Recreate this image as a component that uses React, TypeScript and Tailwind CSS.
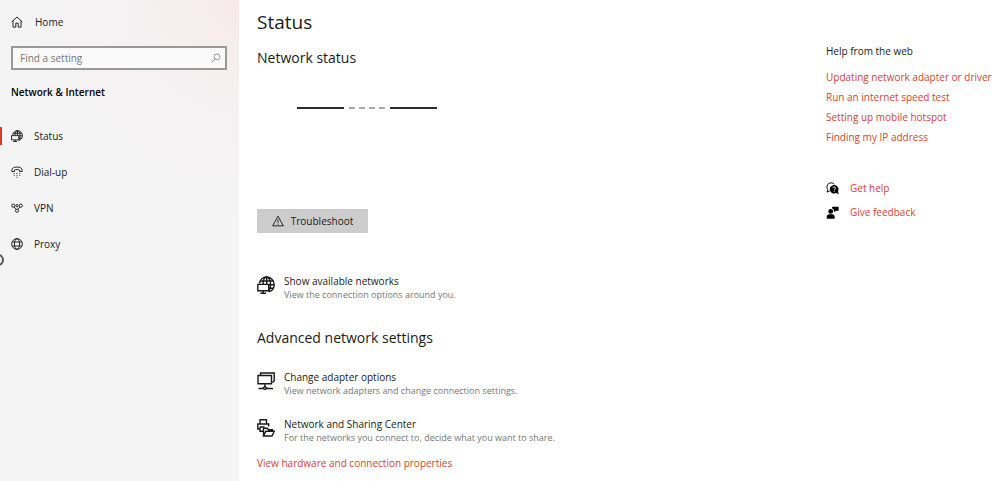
import type { ComponentType, ReactNode } from 'react'

type IconProps = { className?: string }

function LineIcon({ className, children }: { className?: string; children: ReactNode }) {
  return (
    <svg
      viewBox="0 0 18 18"
      className={className}
      fill="none"
      stroke="currentColor"
      strokeWidth="1.4"
      aria-hidden="true"
    >
      {children}
    </svg>
  )
}

function HomeIcon({ className }: IconProps) {
  return (
    <LineIcon className={className}>
      <path d="M1 9 9 1.500 17 9M3 7.200v9.500h4.200v-6h3.600v6H15V7.200" />
    </LineIcon>
  )
}

function SearchIcon({ className }: IconProps) {
  return (
    <LineIcon className={className}>
      <circle cx="11" cy="7" r="5.300" />
      <path d="M7.200 10.800 1 17" />
    </LineIcon>
  )
}

function NetworkGlobeIcon({ className }: IconProps) {
  return (
    <LineIcon className={className}>
      <path d="M2.500 7.500C3.100 3.700 6 1 9.500 1c4.300 0 7.700 3.300 7.700 7.400 0 3.700-2.500 6.600-5.700 7.300" />
      <path d="M6 8C6.200 4 7.700 1 9.700 1s3.900 3.300 3.900 7.400c0 2.600-.700 4.900-1.700 6.300M9.700 1v7M3.300 5h13M12 8.700h5.200M12 12.200h4.200" />
      <path d="M.800 8.400h10.900v6.400H.800zM6.200 14.800v2.400M3.400 17.200h5.600" />
    </LineIcon>
  )
}

function PhoneIcon({ className }: IconProps) {
  return (
    <LineIcon className={className}>
      <path d="M1.200 6.300C1.200 3.300 4.500 1.500 9 1.500s7.800 1.800 7.800 4.800v1.900h-4V6c-2-.900-5.600-.900-7.600 0v2.200h-4z" />
      <path d="M4 11h1.500M8.200 11h1.500M12.500 11H14M4 14h1.500M8.200 14h1.500M12.500 14H14M8.200 17h1.500" />
    </LineIcon>
  )
}

function VpnIcon({ className }: IconProps) {
  return (
    <LineIcon className={className}>
      <circle cx="3.300" cy="5.500" r="2.400" />
      <circle cx="9" cy="5.500" r="1.800" />
      <circle cx="14.700" cy="5.500" r="2.400" />
      <circle cx="9" cy="13" r="2.400" />
      <path d="M4.500 7.500 7.500 11M13.500 7.500l-3 3.500" />
    </LineIcon>
  )
}

function GlobeIcon({ className }: IconProps) {
  return (
    <LineIcon className={className}>
      <circle cx="9" cy="9" r="8" />
      <ellipse cx="9" cy="9" rx="3.800" ry="8" />
      <path d="M1.800 6h14.400M1.800 12h14.400" />
    </LineIcon>
  )
}

function WarningIcon({ className }: IconProps) {
  return (
    <LineIcon className={className}>
      <path d="M9 1.800 17 16.300H1zM9 6.500v5M9 13v1.500" />
    </LineIcon>
  )
}

function AdapterIcon({ className }: IconProps) {
  return (
    <LineIcon className={className}>
      <path d="M3.500 3.300V1h13.700v8l-2 1.500" />
      <path d="M1 3.500h13.500v8.300H1zM8 11.800v2.700M1.500 16.500h4.700M9.800 16.500H16" />
      <path d="M8 14.500 10 16.200 8 17.500 6 16.200z" />
    </LineIcon>
  )
}

function SharingIcon({ className }: IconProps) {
  return (
    <LineIcon className={className}>
      <path d="M3 5V.800h6.500V5M3 10H.800V5h10.900v2.500M3 8h4.500M3 8v4.300h3" />
      <path d="M6.500 16.500V9.200h3.800l1.200 1.500h4v1.500M6.500 17l2.300-4.800h8.500L15 17z" />
    </LineIcon>
  )
}

function HelpIcon({ className }: IconProps) {
  return (
    <svg viewBox="0 0 18 18" className={className} aria-hidden="true">
      <path
        d="M5 12.500 1.500 14l.800-3.500C-.200 6 2.300 1.200 7 1.200c1.800 0 3.300.700 4.400 1.900"
        fill="none"
        stroke="currentColor"
        strokeWidth="1.300"
      />
      <path
        d="M11.300 4a6 6 0 0 1 5.300 8.800l1 4.200-3.700-1.600A6 6 0 1 1 11.300 4z"
        fill="currentColor"
      />
      <path
        d="M9.500 8.500c0-2.300 3.700-2.300 3.700 0 0 1.400-1.800 1.300-1.800 2.900M11.400 12.300v1.300"
        fill="none"
        stroke="white"
        strokeWidth="1.200"
      />
    </svg>
  )
}

function FeedbackIcon({ className }: IconProps) {
  return (
    <svg viewBox="0 0 18 18" className={className} fill="currentColor" aria-hidden="true">
      <circle cx="6.500" cy="7.500" r="3.300" />
      <path d="M1 17.500v-2.500c0-2.100 1.500-3.500 3.500-3.500h4c2 0 3.500 1.400 3.500 3.500v2.500z" />
      <path d="M8.500 1h9v5.500h-3.700L11.500 9V6.500H10.800C10.800 4.800 10 3.800 8.500 3.300z" />
    </svg>
  )
}

const navItems: { label: string; icon: ComponentType<IconProps>; active?: boolean }[] = [
  { label: 'Status', icon: NetworkGlobeIcon, active: true },
  { label: 'Dial-up', icon: PhoneIcon },
  { label: 'VPN', icon: VpnIcon },
  { label: 'Proxy', icon: GlobeIcon },
]

const helpLinks = [
  'Updating network adapter or driver',
  'Run an internet speed test',
  'Setting up mobile hotspot',
  'Finding my IP address',
]

function Option({
  icon: Icon,
  title,
  text,
}: {
  icon: ComponentType<IconProps>
  title: string
  text: string
}) {
  return (
    <button type="button" className="flex items-start gap-[9px] text-left">
      <Icon className="mt-[2px] w-[18px] h-[18px] shrink-0" />
      <span>
        <span className="block leading-[14px]">{title}</span>
        <span className="block text-[9px] leading-[14px] text-[#777777]">{text}</span>
      </span>
    </button>
  )
}

export default function App() {
  return (
    <div className="relative flex min-h-screen overflow-hidden bg-white font-['Open_Sans','Noto_Sans',sans-serif] text-[10px] text-[#1a1a1a]">
      {/* Sidebar */}
      <div className="w-[239px] shrink-0 bg-[#f4f4f4] bg-[radial-gradient(circle_at_top_right,#f7eae9,#f5f1f2_100px,#f4f4f4_220px)]">
        <a href="#home" className="flex h-11 items-center gap-3 pl-[11px]">
          <HomeIcon className="w-3 h-3" />
          Home
        </a>
        <div className="mt-[2px] ml-[11px] mr-3 flex h-6 items-center border-2 border-[#999999] bg-[#fafafa] pr-1">
          <input
            type="text"
            aria-label="Find a setting"
            placeholder="Find a setting"
            className="min-w-0 flex-1 bg-transparent pl-[7px] leading-4 placeholder-[#767676] outline-none"
          />
          <SearchIcon className="w-[10px] h-[10px] text-[#808080]" />
        </div>
        <h2 className="mt-3 pl-[11px] leading-5 font-semibold text-black">
          Network &amp; Internet
        </h2>
        <nav className="mt-4">
          {navItems.map(({ label, icon: Icon, active }) => (
            <a key={label} href={`#${label}`} className="flex h-9 items-center">
              <span className={active ? 'h-[18px] w-[2px] bg-[#dd3b20]' : 'h-[18px] w-[2px]'} />
              <Icon className="ml-[9px] mr-[11px] w-3 h-3" />
              {label}
            </a>
          ))}
        </nav>
      </div>

      {/* Status page */}
      <main className="flex min-w-0 flex-1 flex-col items-start pl-[18px] pb-3">
        <h1 className="text-[19px] leading-[44px]">Status</h1>
        <h2 className="text-[14px] leading-7">Network status</h2>
        <svg
          viewBox="0 0 140 2"
          className="mt-[35px] mb-25 ml-10 w-[140px] h-[2px]"
          strokeWidth="2"
          aria-hidden="true"
        >
          <path d="M0 1h47M93 1h47" stroke="#2b2b2b" />
          <path d="M52 1h6M62 1h6M72 1h6M82 1h6" stroke="#aaaaaa" />
        </svg>
        <button
          type="button"
          className="flex h-6 w-[111px] items-center justify-center gap-[7px] bg-[#cccccc]"
        >
          <WarningIcon className="w-3 h-3" />
          Troubleshoot
        </button>
        <div className="mt-[41px]">
          <Option
            icon={NetworkGlobeIcon}
            title="Show available networks"
            text="View the connection options around you."
          />
        </div>
        <h2 className="mt-[22px] text-[14px] leading-7">Advanced network settings</h2>
        <div className="mt-[18px] flex flex-col items-start gap-[19px]">
          <Option
            icon={AdapterIcon}
            title="Change adapter options"
            text="View network adapters and change connection settings."
          />
          <Option
            icon={SharingIcon}
            title="Network and Sharing Center"
            text="For the networks you connect to, decide what you want to share."
          />
        </div>
        <a href="#properties" className="mt-[11px] leading-[14px] text-[#d9432a]">
          View hardware and connection properties
        </a>
      </main>

      {/* Help */}
      <aside className="w-[173px] shrink-0 pt-[41px] whitespace-nowrap">
        <h3 className="leading-5">Help from the web</h3>
        <ul className="mt-[6px] leading-5 text-[#d9432a]">
          {helpLinks.map((link) => (
            <li key={link}>
              <a href="#help">{link}</a>
            </li>
          ))}
        </ul>
        <div className="mt-[29px] flex flex-col">
          <a href="#get-help" className="flex h-6 items-center gap-[11px] text-[#d9432a]">
            <HelpIcon className="w-[13px] h-[13px] text-black" />
            Get help
          </a>
          <a href="#feedback" className="flex h-6 items-center gap-[11px] text-[#d9432a]">
            <FeedbackIcon className="w-[13px] h-[13px] text-black" />
            Give feedback
          </a>
        </div>
      </aside>

      {/* Busy cursor at the window edge */}
      <span className="absolute top-[254px] -left-2 w-3 h-3 rounded-full border-2 border-[#555555]" />
    </div>
  )
}
